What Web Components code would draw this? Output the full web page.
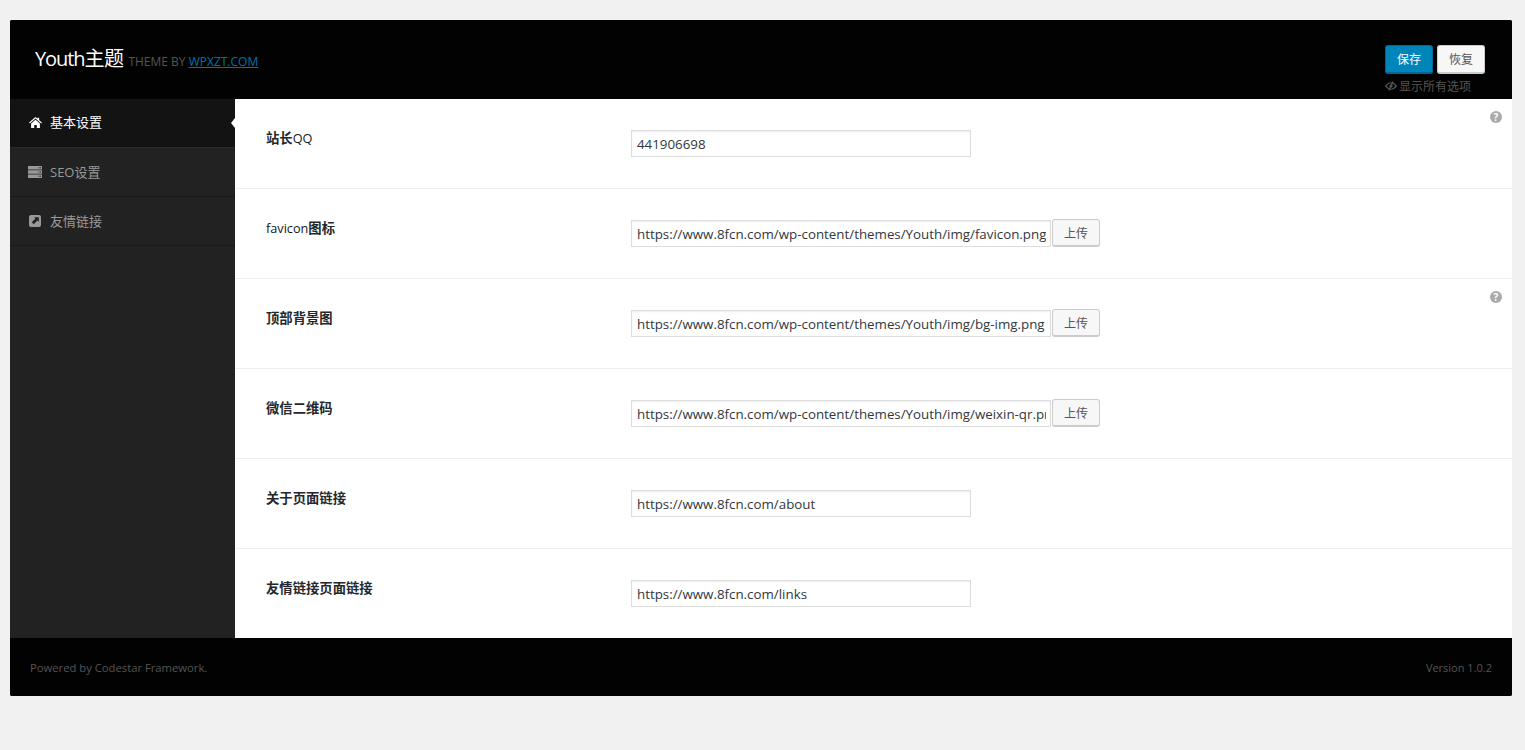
<!DOCTYPE html>
<html lang="zh">
<head>
<meta charset="utf-8">
<title>Youth主题</title>
<style>
    body {
        margin: 0;
        background: #f1f1f1;
        font-family: "Open Sans", "Noto Sans CJK SC", sans-serif;
        font-size: 13px;
        color: #444;
    }
</style>
</head>
<body>
<options-panel>
    <panel-header slot="header"></panel-header>
    <nav-item slot="nav" icon="home" active>基本设置</nav-item>
    <nav-item slot="nav" icon="server">SEO设置</nav-item>
    <nav-item slot="nav" icon="link">友情链接</nav-item>
    <option-row label="站长QQ" value="441906698" help></option-row>
    <option-row label="favicon图标" value="https://www.8fcn.com/wp-content/themes/Youth/img/favicon.png" upload></option-row>
    <option-row label="顶部背景图" value="https://www.8fcn.com/wp-content/themes/Youth/img/bg-img.png" upload help></option-row>
    <option-row label="微信二维码" value="https://www.8fcn.com/wp-content/themes/Youth/img/weixin-qr.png" upload></option-row>
    <option-row label="关于页面链接" value="https://www.8fcn.com/about"></option-row>
    <option-row label="友情链接页面链接" value="https://www.8fcn.com/links" last></option-row>
</options-panel>

<script>
const ICONS = {
    home: '<svg viewBox="0 0 14 12" width="13" height="11"><path fill="currentColor" d="M7 0 L9.2 1.9 V0.8 H11 V3.5 L14 6.1 L13.2 7 L7 1.7 L.8 7 L0 6.1 Z M2.2 7.2 L7 3.1 L11.8 7.2 V12 H8.4 V8.6 H5.6 V12 H2.2 Z"/></svg>',
    server: '<svg viewBox="0 0 14 12" width="14" height="12"><path fill="currentColor" fill-rule="evenodd" d="M0 0H14V3.4H0Z M0 4.3H14V7.7H0Z M0 8.6H14V12H0Z M10.5 1.2V2.2H11.5V1.2Z M12 1.2V2.2H13V1.2Z M10.5 5.5V6.5H11.5V5.5Z M12 5.5V6.5H13V5.5Z M10.5 9.8V10.8H11.5V9.8Z M12 9.8V10.8H13V9.8Z"/></svg>',
    link: '<svg viewBox="0 0 12 12" width="12" height="12"><path fill="currentColor" fill-rule="evenodd" d="M2 0H10Q12 0 12 2V10Q12 12 10 12H2Q0 12 0 10V2Q0 0 2 0Z M5 2.2 L6.4 3.6 L2.8 7.2 L4.8 9.2 L8.4 5.6 L9.8 7 V2.2Z"/></svg>'
};

class OptionsPanel extends HTMLElement {
    constructor() {
        super();
        this.attachShadow({mode: 'open'});
        this.shadowRoot.innerHTML = `
<style>
    :host {
        display: block;
        margin: 20px 13px 0 10px;
        background: #222;
        border-radius: 2px;
        overflow: hidden;
    }
    .body {
        display: grid;
        grid-template-columns: 225px 1fr;
    }
    .nav {
        display: flex;
        flex-direction: column;
    }
    .content {
        background: #fff;
        display: flex;
        flex-direction: column;
    }
    footer {
        height: 58px;
        background: #020202;
        color: #555;
        font-size: 11.25px;
        padding: 0 20px;
        display: flex;
        justify-content: space-between;
        align-items: center;
    }
    footer span:last-child {
        font-size: 11px;
    }
</style>
<slot name="header"></slot>
<div class="body">
    <div class="nav"><slot name="nav"></slot></div>
    <div class="content"><slot></slot></div>
</div>
<footer><span>Powered by Codestar Framework.</span><span>Version 1.0.2</span></footer>
        `;
    }
}

class PanelHeader extends HTMLElement {
    constructor() {
        super();
        this.attachShadow({mode: 'open'});
        this.shadowRoot.innerHTML = `
<style>
    :host {
        display: flex;
        justify-content: space-between;
        height: 79px;
        box-sizing: border-box;
        background: #020202;
        padding: 25px 27px 0 25px;
    }
    h1 {
        margin: 0;
        font-size: 20px;
        font-weight: 400;
        line-height: 28px;
        color: #fff;
        letter-spacing: -0.4px;
    }
    h1 b {
        font-weight: 400;
        letter-spacing: -1.1px;
    }
    small {
        font-size: 12px;
        color: #555;
        letter-spacing: 0;
    }
    a {
        color: #0073aa;
        text-decoration: underline;
    }
    .side {
        display: flex;
        flex-direction: column;
        align-items: flex-start;
    }
    .buttons {
        display: flex;
        gap: 4px;
    }
    button {
        width: 48px;
        height: 29px;
        padding: 0;
        border-radius: 3px;
        font: inherit;
        font-size: 12px;
    }
    .save {
        background: #0085ba;
        color: #fff;
        border: 1px solid #006799;
        border-bottom-width: 2px;
    }
    .reset {
        background: #f7f7f7;
        color: #555;
        border: 1px solid #ccc;
        border-bottom-width: 2px;
    }
    .show-all {
        display: flex;
        align-items: center;
        gap: 2px;
        height: 22px;
        margin-top: 1px;
        font-size: 12px;
        color: #555;
        white-space: nowrap;
    }
</style>
<h1><b>Youth</b>主题 <small>THEME BY <a>WPXZT.COM</a></small></h1>
<div class="side">
    <div class="buttons"><button class="save">保存</button><button class="reset">恢复</button></div>
    <div class="show-all">
        <svg viewBox="0 0 12 10" width="12" height="10"><path fill="none" stroke="currentColor" stroke-width="1.2" d="M.6 5Q6-1.5 11.4 5Q6 11.5.6 5Z M8 .5L4 9.5"/><circle cx="6" cy="5" r="1.6" fill="currentColor"/></svg>
        <span>显示所有选项</span>
    </div>
</div>
        `;
    }
}

class NavItem extends HTMLElement {
    constructor() {
        super();
        this.attachShadow({mode: 'open'});
    }

    connectedCallback() {
        this.shadowRoot.innerHTML = `
<style>
    :host {
        display: flex;
        align-items: center;
        position: relative;
        height: 48px;
        border-bottom: 1px solid #191919;
        padding-left: 18px;
        color: #999;
        background: #222;
        font-size: 13px;
    }
    :host([active]) {
        background: #131313;
        color: #fff;
        border-bottom-color: #2a2a2a;
    }
    .icon {
        width: 22px;
        display: flex;
        align-items: center;
        margin-top: -1px;
    }
    :host([icon="home"]) .icon,
    :host([icon="link"]) .icon {
        width: 21px;
        margin-left: 1px;
    }
    .text {
        margin-top: -2px;
    }
    :host([active]) .text {
        margin-top: -3px;
    }
    :host([active])::after {
        content: "";
        position: absolute;
        right: 0;
        top: 19px;
        border: 5px solid transparent;
        border-right-color: #fff;
        border-left-width: 0;
        transform: scaleX(0.8);
        transform-origin: right;
    }
</style>
<span class="icon">${ICONS[this.getAttribute('icon')]}</span><span class="text"><slot></slot></span>
        `;
    }
}

class OptionRow extends HTMLElement {
    constructor() {
        super();
        this.attachShadow({mode: 'open'});
    }

    connectedCallback() {
        const upload = this.hasAttribute('upload');
        // latin part of a label is regular weight in the reference, only the CJK looks bold
        const label = this.getAttribute('label').replace(/[A-Za-z]+/g, '<span>$&</span>');
        this.shadowRoot.innerHTML = `
<style>
    :host {
        display: grid;
        grid-template-columns: 396px 1fr;
        position: relative;
        height: 90px;
        box-sizing: border-box;
        border-bottom: 1px solid #eee;
        padding-top: 31px;
    }
    :host([last]) {
        border-bottom: 0;
        height: 89px;
    }
    label {
        padding-left: 31px;
        font-weight: 600;
        font-size: 13.33px;
        line-height: 16px;
        color: #23282d;
    }
    label span {
        font-weight: 400;
        font-size: 12.7px;
        color: #15181b;
    }
    .field {
        display: flex;
        align-items: flex-start;
    }
    .input {
        width: ${upload ? 420 : 340}px;
        height: 27px;
        box-sizing: border-box;
        border: 1px solid #ddd;
        box-shadow: inset 0 1px 2px rgba(0, 0, 0, 0.07);
        padding: 0 4px 0 5px;
        font-size: 13.33px;
        line-height: 26px;
        color: #32373c;
    }
    .input span {
        display: block;
        height: 100%;
        white-space: nowrap;
        overflow: hidden;
    }
    .upload {
        width: 48px;
        height: 28px;
        margin: -1px 0 0 1px;
        padding: 1px 0 0;
        border: 1px solid #ccc;
        border-bottom-width: 2px;
        border-radius: 3px;
        background: #f7f7f7;
        color: #555;
        font: inherit;
        font-size: 12px;
    }
    .help {
        position: absolute;
        top: 12px;
        right: 10px;
        width: 12px;
        height: 12px;
        border-radius: 50%;
        background: #aaa;
        color: #fff;
        font-size: 10px;
        font-weight: 700;
        line-height: 12px;
        text-align: center;
    }
</style>
<label>${label}</label>
<div class="field">
    <div class="input"><span>${this.getAttribute('value')}</span></div>
    ${upload ? '<button class="upload">上传</button>' : ''}
</div>
${this.hasAttribute('help') ? '<span class="help">?</span>' : ''}
        `;
    }
}

customElements.define('options-panel', OptionsPanel);
customElements.define('panel-header', PanelHeader);
customElements.define('nav-item', NavItem);
customElements.define('option-row', OptionRow);
</script>
</body>
</html>
